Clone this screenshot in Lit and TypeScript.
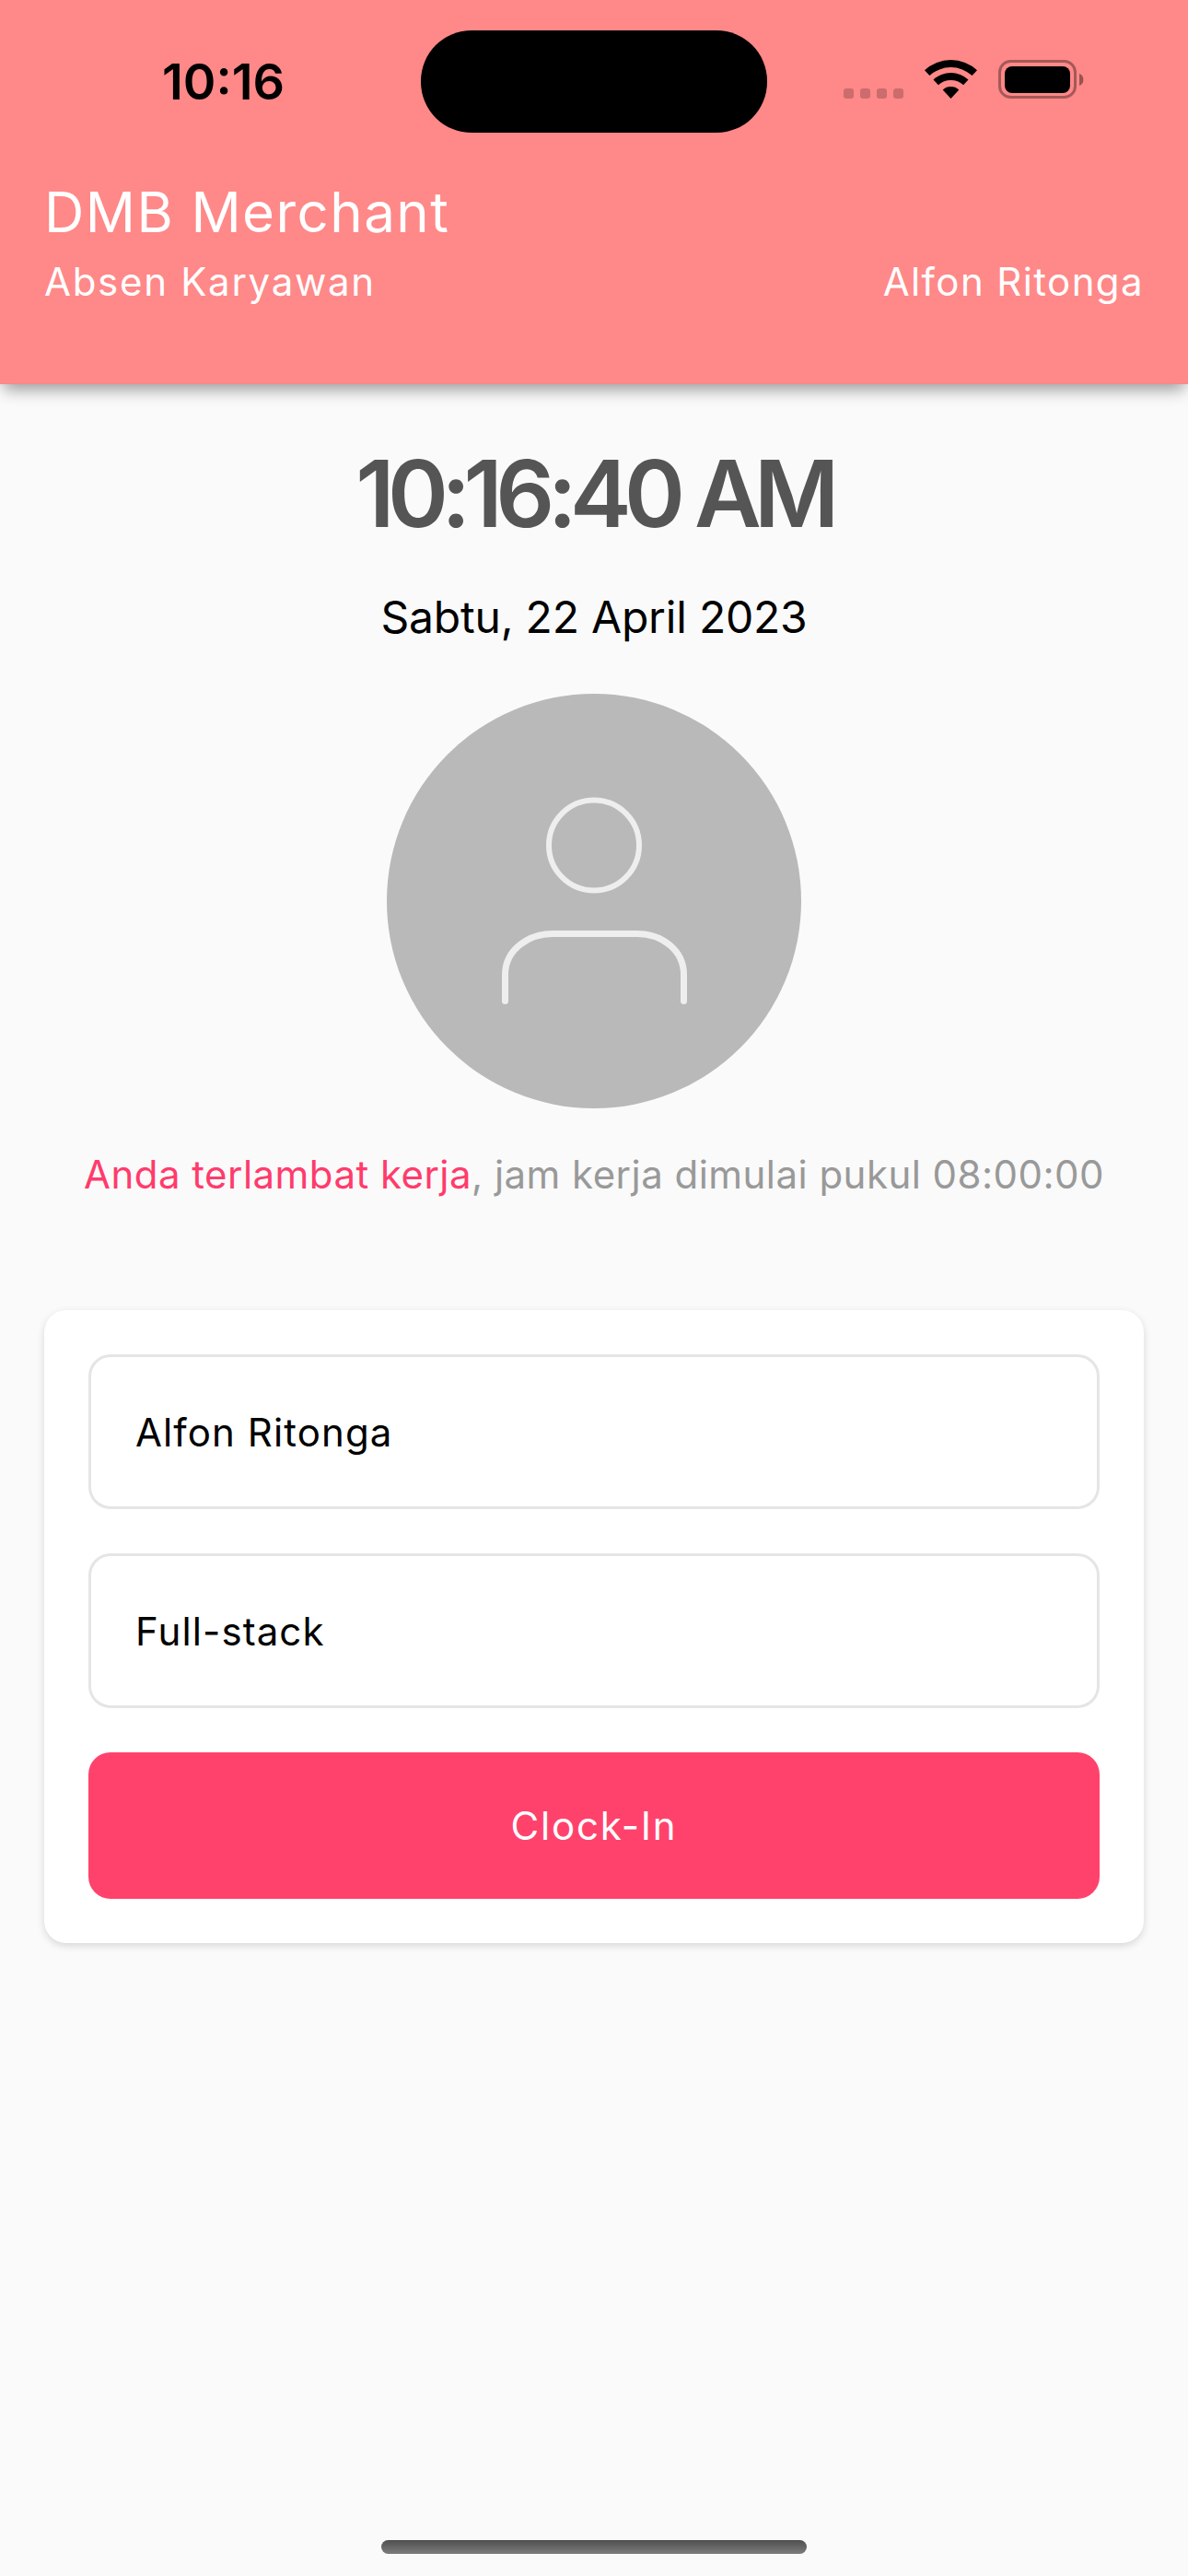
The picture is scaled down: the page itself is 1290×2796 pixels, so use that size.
import {css, html, LitElement} from 'lit';
import {customElement} from 'lit/decorators.js';

@customElement('app-root')
export class AppRoot extends LitElement {
    static styles = css`
        :host {
            display: flex;
            flex-direction: column;
            min-height: 2796px;
            background: #fafafa;
            font-family: Inter, "Liberation Sans", sans-serif;
            color: #000;
        }

        .header {
            height: 417px;
            box-sizing: border-box;
            padding-top: 33px;
            background: #ff8888;
            box-shadow: 0 10px 16px -4px rgba(0, 0, 0, 0.38);
        }

        .status {
            display: flex;
            height: 111px;
            padding-left: 176px;
        }

        .clock {
            width: 281px;
            font-size: 54px;
            font-weight: 600;
            line-height: 111px;
        }

        .island {
            width: 376px;
            height: 111px;
            border-radius: 55px;
            background: #000;
        }

        .indicators {
            display: flex;
            align-items: flex-end;
            height: 42px;
            margin: 32px 0 0 83px;
        }

        .dots {
            display: flex;
            gap: 7px;
            margin-right: 23px;
        }

        .dots i {
            width: 11px;
            height: 11px;
            border-radius: 3px;
            background: rgba(0, 0, 0, 0.2);
        }

        .wifi {
            display: block;
            width: 57px;
            height: 42px;
            margin-right: 23px;
        }

        .battery {
            display: block;
            width: 93px;
            height: 42px;
        }

        .brand {
            padding: 50px 48px 0 48px;
            color: #fff;
        }

        .title {
            font-size: 60px;
            line-height: 72px;
            letter-spacing: 1.45px;
        }

        .sub {
            display: flex;
            justify-content: space-between;
            margin-top: 15px;
            font-size: 42px;
            line-height: 50px;
            letter-spacing: 1.7px;
        }

        .user {
            letter-spacing: 1.4px;
        }

        .time {
            margin-top: 59px;
            text-align: center;
            color: #555;
            font-size: 100px;
            font-weight: 600;
            line-height: 120px;
            letter-spacing: -7.6px;
        }

        .date {
            margin-top: 45px;
            text-align: center;
            font-size: 48px;
            line-height: 58px;
            letter-spacing: -0.2px;
        }

        .avatar {
            display: flex;
            align-items: center;
            justify-content: center;
            align-self: center;
            width: 450px;
            height: 450px;
            margin-top: 54px;
            border-radius: 50%;
            background: #b9b9b9;
        }

        .avatar svg {
            display: block;
            width: 204px;
            height: 228px;
        }

        .notice {
            margin-top: 47px;
            text-align: center;
            color: #999;
            font-size: 42px;
            line-height: 50px;
            letter-spacing: 0.46px;
        }

        .notice span {
            color: #ff3b6c;
        }

        .card {
            display: flex;
            flex-direction: column;
            gap: 48px;
            margin: 122px 48px 0;
            padding: 48px;
            border-radius: 24px;
            background: #fff;
            box-shadow: 0 3px 8px rgba(0, 0, 0, 0.14);
        }

        .field {
            display: flex;
            align-items: center;
            height: 168px;
            box-sizing: border-box;
            padding-left: 48px;
            border: 3px solid #e5e5e5;
            border-radius: 24px;
            font-size: 42px;
            letter-spacing: 1.1px;
        }

        .button {
            display: flex;
            align-items: center;
            justify-content: center;
            height: 159px;
            border-radius: 24px;
            background: #ff426c;
            color: #fff;
            font-size: 42px;
            letter-spacing: 1.8px;
        }

        .home {
            align-self: center;
            width: 462px;
            height: 15px;
            margin: auto 0 24px;
            border-radius: 8px;
            background: linear-gradient(#4f4f4f, #7c7c7c);
        }
    `;

    render() {
        return html`
            <header class="header">
                <div class="status">
                    <div class="clock">10:16</div>
                    <div class="island"></div>
                    <div class="indicators">
                        <div class="dots"><i></i><i></i><i></i><i></i></div>
                        <svg class="wifi" viewBox="0 0 57 42">
                            <path d="M0 11.2A42 42 0 0 1 57 11.2L51.6 17.1A34 34 0 0 0 5.4 17.1Z"/>
                            <path d="M9.5 21.5A28 28 0 0 1 47.5 21.5L42.1 27.3A20 20 0 0 0 14.9 27.3Z"/>
                            <path d="M19.7 32.5A13 13 0 0 1 37.3 32.5L28.5 42Z"/>
                        </svg>
                        <svg class="battery" viewBox="0 0 93 42">
                            <rect x="1.5" y="1.5" width="82" height="39" rx="12" fill="none" stroke="#000" stroke-opacity="0.35" stroke-width="3"/>
                            <rect x="7" y="7" width="71" height="29" rx="8"/>
                            <path d="M88 15a7 7 0 0 1 0 13Z" fill-opacity="0.4"/>
                        </svg>
                    </div>
                </div>
                <div class="brand">
                    <div class="title">DMB Merchant</div>
                    <div class="sub">
                        <span>Absen Karyawan</span>
                        <span class="user">Alfon Ritonga</span>
                    </div>
                </div>
            </header>

            <div class="time">10:16:40 AM</div>
            <div class="date">Sabtu, 22 April 2023</div>

            <div class="avatar">
                <svg viewBox="0 0 204 228" fill="none" stroke="#eeeeee" stroke-linecap="round">
                    <circle cx="102" cy="53.5" r="49" stroke-width="6"/>
                    <path stroke-width="7" d="M5.5 222.5V194C5.5 166 32 149.5 57 149.5H149C174 149.5 199.5 166 199.5 194V222.5"/>
                </svg>
            </div>

            <div class="notice"><span>Anda terlambat kerja</span>, jam kerja dimulai pukul 08:00:00</div>

            <div class="card">
                <div class="field">Alfon Ritonga</div>
                <div class="field">Full-stack</div>
                <div class="button">Clock-In</div>
            </div>

            <div class="home"></div>
        `;
    }
}
